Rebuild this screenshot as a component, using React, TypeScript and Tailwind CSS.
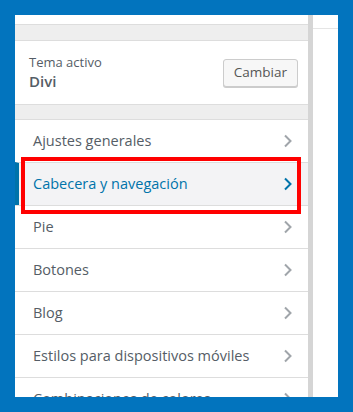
import React from 'react';

const sections = [
  { label: 'Ajustes generales' },
  { label: 'Cabecera y navegación', active: true },
  { label: 'Pie' },
  { label: 'Botones' },
  { label: 'Blog' },
  { label: 'Estilos para dispositivos móviles' },
  { label: 'Combinaciones de colores' },
];

function Chevron({ active }: { active?: boolean }) {
  return (
    <svg width="10" height="14" viewBox="0 0 10 14" className="shrink-0">
      <path
        d="M2 1.5 L7.5 7 L2 12.5"
        fill="none"
        stroke={active ? '#0073aa' : '#a0a5aa'}
        strokeWidth="2"
      />
    </svg>
  );
}

export default function App() {
  return (
    <div
      className="w-[353px] h-[412px] bg-[#0274be] p-[15px] overflow-hidden"
      style={{ fontFamily: '"Open Sans", "Noto Sans", sans-serif' }}
    >
      <div className="flex h-full bg-white overflow-hidden">
        {/* Customizer panel */}
        <div className="w-[293px] shrink-0 flex flex-col overflow-hidden bg-white">
          <div className="h-[10px] border-b border-[#dddddd] shrink-0" />
          <div className="h-[16px] bg-[#eeeeee] border-b border-[#dddddd] shrink-0" />

          {/* Active theme */}
          <div className="h-[64px] shrink-0 flex items-center justify-between pl-[14px] pr-[10px] border-b border-[#dddddd]">
            <div className="flex flex-col">
              <span className="text-[13px] leading-[17px] text-[#555d66]">Tema activo</span>
              <span className="text-[15px] leading-[20px] font-semibold text-[#555d66]">Divi</span>
            </div>
            <button className="h-[28px] px-[10px] rounded-[3px] border border-[#cccccc] bg-[#f7f7f7] text-[13.5px] text-[#555555] shadow-[0_1px_0_#cccccc]">
              Cambiar
            </button>
          </div>

          <div className="h-[14px] bg-[#eeeeee] shrink-0" />

          {/* Sections */}
          <ul className="flex flex-col">
            {sections.map((s) => (
              <li
                key={s.label}
                className={
                  s.active
                    ? 'relative h-[43px] shrink-0 flex items-center justify-between pl-[14px] pr-[15px] border-t border-[#dddddd] border-l-[4px] border-l-[#0073aa] bg-[#f3f3f5]'
                    : 'h-[43px] shrink-0 flex items-center justify-between pl-[18px] pr-[15px] border-t border-[#dddddd]'
                }
              >
                <span className={s.active ? 'text-[14.5px] text-[#0073aa]' : 'text-[14.5px] text-[#555d66]'}>
                  {s.label}
                </span>
                <Chevron active={s.active} />
                {s.active && (
                  <div className="absolute left-[2px] top-[-6px] w-[280px] h-[57px] border-[4px] border-[#ff0000] pointer-events-none" />
                )}
              </li>
            ))}
          </ul>
        </div>

        {/* Scrollbar */}
        <div className="w-[5px] shrink-0 bg-[#d5d5d5]" />

        {/* Preview edge */}
        <div className="flex-1 bg-white">
          <div className="h-[14px] border-b border-[#e5e5e5]" />
        </div>
      </div>
    </div>
  );
}
